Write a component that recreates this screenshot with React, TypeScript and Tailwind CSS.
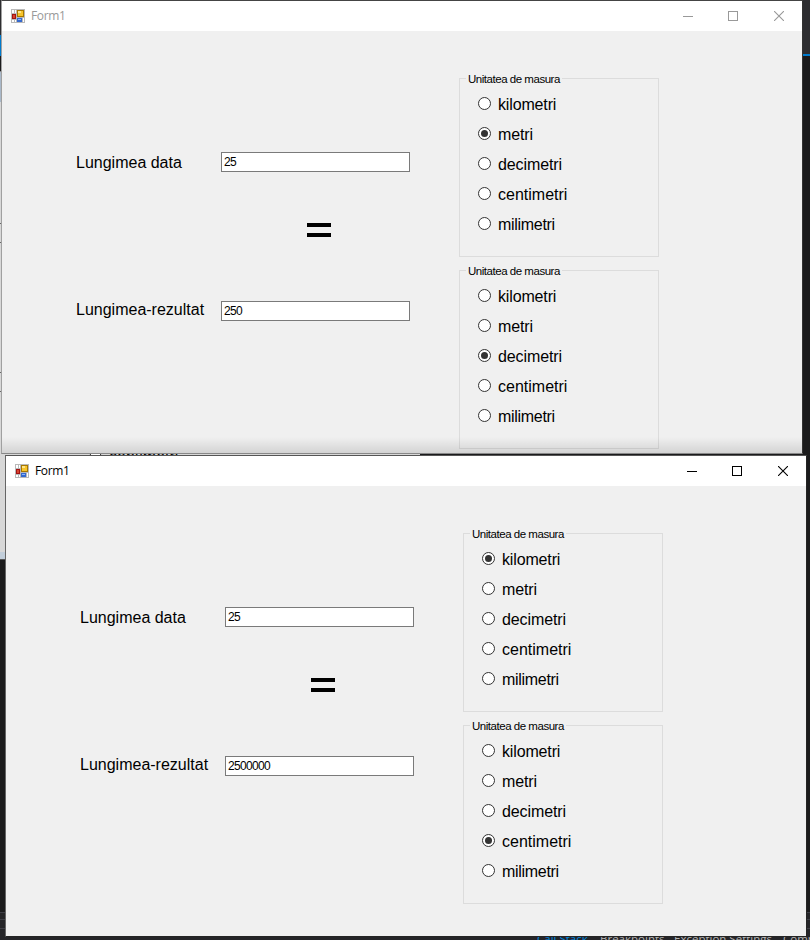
const UNITS = ["kilometri", "metri", "decimetri", "centimetri", "milimetri"];

const UNIT_SPACING: Record<string, string> = {
  kilometri: "tracking-[-0.15px]",
  metri: "tracking-[-0.1px]",
  decimetri: "tracking-[-0.1px]",
  centimetri: "tracking-[0px]",
  milimetri: "tracking-[-0.3px]",
};

function FormIcon() {
  return (
    <svg width="14" height="14" viewBox="0 0 14 14" shapeRendering="crispEdges">
      <rect width="14" height="14" fill="#b9b9b9" />
      <path d="M1 1h2v3H1zM4 1h1v3H4zM1 11h2v2H1zM4 11h1v2H4zM12 9h1v4h-1z" fill="#fff" />
      <rect x="1" y="5" width="4" height="5" fill="#a31212" />
      <rect x="2" y="6" width="2" height="3" fill="#d8442f" />
      <rect x="6" y="1" width="7" height="7" fill="#a87800" />
      <rect x="7" y="2" width="5" height="5" fill="#f7c52c" />
      <rect x="7" y="2" width="3" height="2" fill="#ffe58a" />
      <rect x="6" y="9" width="5" height="4" fill="#3569cf" />
      <rect x="7" y="10" width="3" height="1" fill="#8db7f7" />
    </svg>
  );
}

function TitleBar({ active }: { active: boolean }) {
  return (
    <div className={`flex h-[30px] items-center bg-white pl-[9px] ${active ? "text-black" : "text-[#999999]"}`}>
      <FormIcon />
      <span className="ml-1.5 grow font-['Open_Sans',sans-serif] text-[12px] leading-[16px] tracking-[-0.35px]">Form1</span>
      <div className="flex h-full">
        <div className="flex w-[46px] items-center justify-center">
          <svg width="10" height="10" stroke="currentColor" shapeRendering="crispEdges"><path d="M0 5.5H10" /></svg>
        </div>
        <div className="flex w-[45px] items-center pl-[17px]">
          <svg width="10" height="10" fill="none" stroke="currentColor" shapeRendering="crispEdges"><path d="M.5.5h9v9h-9z" /></svg>
        </div>
        <div className="flex w-[46px] items-center justify-center">
          <svg width="10" height="10" stroke="currentColor" strokeWidth="1.1"><path d="M0 0L10 10M10 0L0 10" /></svg>
        </div>
      </div>
    </div>
  );
}

function Radio({ checked }: { checked: boolean }) {
  return (
    <svg width="13" height="13" viewBox="0 0 13 13">
      <circle cx="6.5" cy="6.5" r="6" fill="#fff" stroke="#333" />
      {checked && <circle cx="6.5" cy="6.5" r="3.5" fill="#333" />}
    </svg>
  );
}

function UnitGroup({ selected }: { selected: string }) {
  return (
    <div className="h-[179px] w-[200px] border border-[#dcdcdc]">
      <div className="-mt-2 ml-1.5 h-4 w-[96px] whitespace-nowrap bg-[#f0f0f0] pl-0.5 text-[11.5px] leading-4 tracking-[-0.47px]">
        Unitatea de masura
      </div>
      <div className="flex flex-col pt-[2px] pl-[18px]">
        {UNITS.map((unit) => (
          <div key={unit} className="flex h-[30px] items-start gap-[7px] pt-2">
            <Radio checked={unit === selected} />
            <span className={`-mt-0.5 text-[16px] leading-[20px] ${UNIT_SPACING[unit]}`}>{unit}</span>
          </div>
        ))}
      </div>
    </div>
  );
}

function Field({ label, value, labelClass }: { label: string; value: string; labelClass: string }) {
  return (
    <div className="flex h-5">
      <span className={`w-[145px] whitespace-nowrap text-[16px] leading-5 ${labelClass}`}>{label}</span>
      <div className="h-5 w-[189px] border border-[#7a7a7a] bg-white pl-0.5 text-[12px] leading-[18px] tracking-[-0.67px]">
        {value}
      </div>
    </div>
  );
}

type FormProps = { active: boolean; result: string; from: string; to: string };

function ConverterForm({ active, result, from, to }: FormProps) {
  return (
    <div className="flex h-full w-[800px] flex-col overflow-hidden bg-[#f0f0f0]">
      <TitleBar active={active} />
      <div className="flex pl-[74px]">
        <div className="flex w-[383px] flex-col pt-[121px]">
          <Field label="Lungimea data" value="25" labelClass="mt-px" />
          <div className="flex h-[129px] flex-col gap-1.5 pt-[51px] pl-[231px]">
            <div className="h-1 w-6 bg-black" />
            <div className="h-1 w-6 bg-black" />
          </div>
          <Field label="Lungimea-rezultat" value={result} labelClass="-mt-px" />
        </div>
        <div className="flex flex-col gap-[13px] pt-[47px]">
          <UnitGroup selected={from} />
          <UnitGroup selected={to} />
        </div>
      </div>
    </div>
  );
}

export default function App() {
  return (
    <div className="relative h-[940px] w-[810px] overflow-hidden bg-[#1b1b1c] font-['Liberation_Sans',Arial,sans-serif] text-black">
      {/* Editor behind the two forms */}
      <div className="flex h-[912px] flex-col">
        <div className="h-[54px] bg-[#2d2d30]">
          <div className="h-full w-0.5 pt-[35px]"><div className="h-[21px] bg-[#007acc]" /></div>
        </div>
        <div className="h-0.5 bg-[#007acc]" />
        <div className="mt-[15px] flex h-[489px] w-[420px] flex-col border-t border-[#888] bg-[#d8d8d8]">
          <div className="h-[30px] bg-[#a9b8c9]" />
          <div className="mt-[121px] h-5 border-y border-[#666]" />
          <div className="mt-[129px] h-5 border-y border-[#666]" />
          <div className="mt-auto h-[8px] border-b border-[#555] bg-[#c2ceda]" />
        </div>
      </div>
      <div className="flex h-7 flex-col bg-[#252528]">
        <div className="h-[7px] border-t border-[#3f3f46]" />
        <div className="h-[9px] border-t border-[#3f3f46]" />
        <div className="h-3 border-t border-[#3f3f46]" />
      </div>
      <div className="absolute top-[449px] left-[89px] flex items-center gap-[7px] text-[16px] leading-4">
        <Radio checked={false} />
        <span>centimetri</span>
      </div>
      <div className="absolute top-[932px] left-[537px] flex whitespace-nowrap font-['Open_Sans',sans-serif] text-[11.5px] leading-[14px] text-[#b5b5b5]">
        <span className="w-[63px] text-[#0088e0]">Call Stack</span>
        <span className="w-[74px]">Breakpoints</span>
        <span className="w-[109px]">Exception Settings</span>
        <span>Command</span>
      </div>

      <div className="absolute top-0 left-px h-[454px] w-[802px] border border-t-[#444] border-r-[#333] border-b-[#888] border-l-[#a0a0a0]">
        <ConverterForm active={false} result="250" from="metri" to="decimetri" />
        <div className="absolute inset-x-0 bottom-0 h-4 bg-linear-to-b from-transparent to-black/12" />
      </div>
      <div className="absolute top-[455px] left-[5px] h-[482px] w-[802px] border border-t-[#555] border-r-[#242424] border-b-[#242424] border-l-[#666]">
        <ConverterForm active result="2500000" from="kilometri" to="centimetri" />
      </div>
    </div>
  );
}
